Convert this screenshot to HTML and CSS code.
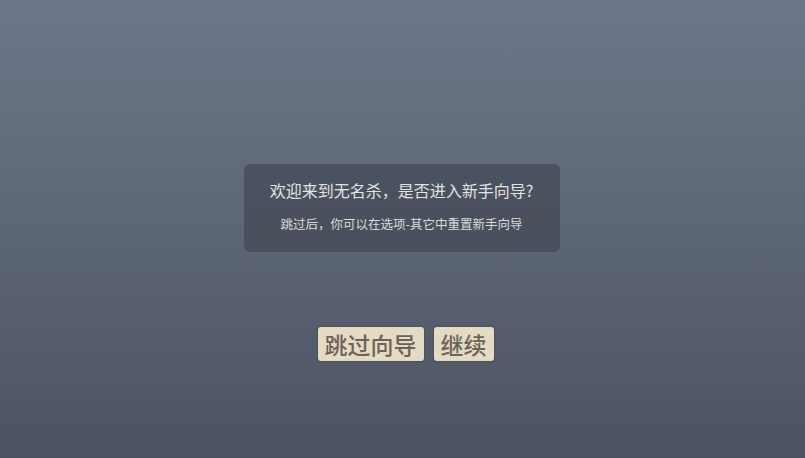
FILE: index.html
```html
<!DOCTYPE html>
<html lang="zh">
<head>
<meta charset="utf-8">
<link rel="stylesheet" href="styles.css">
</head>
<body>
<div class="page">
  <div class="dialog">
    <div class="title">欢迎来到无名杀，是否进入新手向导?</div>
    <div class="sub">跳过后，你可以在选项-其它中重置新手向导</div>
  </div>
  <div class="buttons">
    <div class="btn">跳过向导</div>
    <div class="btn">继续</div>
  </div>
</div>
</body>
</html>
```

FILE: styles.css
```css
html, body {
  margin: 0;
  height: 100%;
}
body {
  background: linear-gradient(to bottom, #6c7789 0%, #5d6676 50%, #4c525f 100%);
  font-family: "Noto Sans CJK SC", "Noto Sans", sans-serif;
}
.page {
  display: flex;
  flex-direction: column;
  align-items: center;
  padding-top: 164px;
  padding-right: 2px;
}
.dialog {
  width: 316px;
  box-sizing: border-box;
  padding: 16px 0 20px;
  background: rgba(62, 66, 76, 0.6);
  border-radius: 6px;
  text-align: center;
  color: #e2e2e2;
}
.title {
  font-size: 16px;
  line-height: 20px;
}
.sub {
  margin-top: 16px;
  font-size: 12.5px;
  line-height: 16px;
  color: #dadada;
}
.buttons {
  display: flex;
  gap: 10px;
  margin-top: 75px;
  margin-left: 8px;
}
.btn {
  height: 34px;
  line-height: 34px;
  padding: 0 7px;
  font-size: 23px;
  font-weight: 500;
  background: #e4dbc4;
  color: #6c6457;
  border-radius: 3px;
  box-shadow: 0 0 2px rgba(0,0,0,0.35);
}
```
